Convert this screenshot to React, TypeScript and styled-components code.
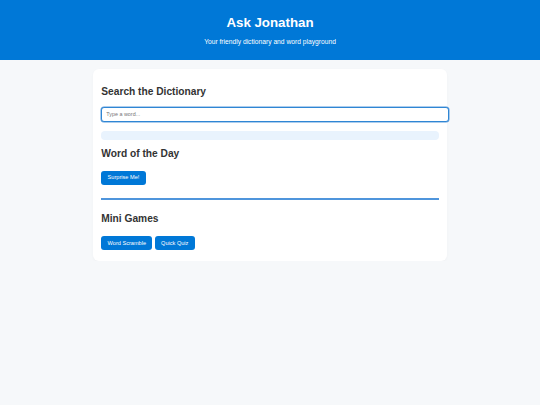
import React, { useState } from 'react';
import styled, { createGlobalStyle } from 'styled-components';

const GlobalStyle = createGlobalStyle`
  html, body {
    margin: 0;
    padding: 0;
    background: #f6f8fa;
    font-family: "Liberation Sans", Arial, sans-serif;
    color: #333;
  }
`;

const Header = styled.header`
  background: #0078d7;
  color: #fff;
  text-align: center;
  padding: 15.3px 0 14.5px;
`;

const Title = styled.h1`
  margin: 0 0 7.2px;
  font-size: 13.3px;
  line-height: 15.3px;
  font-weight: bold;
`;

const Tagline = styled.p`
  margin: 0;
  font-size: 6.7px;
  line-height: 7.7px;
`;

const Main = styled.main`
  padding-top: 9px;
`;

const Card = styled.div`
  width: 354px;
  box-sizing: border-box;
  margin: 0 auto;
  background: #fff;
  border-radius: 6px;
  padding: 8.3px;
  box-shadow: 0 1px 3px rgba(0, 0, 0, 0.03);
`;

const Heading = styled.h2`
  margin: 8.3px 0;
  font-size: 10.2px;
  line-height: 11.5px;
  font-weight: bold;
  color: #333;
`;

const SearchInput = styled.input`
  display: block;
  width: 100%;
  height: 13.6px;
  margin: 9.6px 0 0;
  padding: 0 4px;
  border: 1px solid #2f86d4;
  border-radius: 3px;
  font-family: "Liberation Sans", Arial, sans-serif;
  font-size: 5.4px;
  color: #333;
  outline: none;
  box-shadow: 0 0 0 0.5px #5a9bdc;

  &::placeholder {
    color: #777;
  }
`;

const Result = styled.div`
  margin: 8.7px 0 0;
  height: 8.7px;
  border-radius: 4px;
  background: #e9f3fd;
`;

const ButtonRow = styled.div`
  display: flex;
  gap: 2.4px;
  margin: 11.2px 0 2.9px;
`;

const Button = styled.button`
  height: 13.9px;
  padding: 0 6.3px;
  border: none;
  border-radius: 3px;
  background: #0078d7;
  color: #fff;
  font-family: "Liberation Sans", Arial, sans-serif;
  font-size: 5.6px;
  line-height: 6.4px;
  cursor: pointer;
`;

const Divider = styled.div`
  margin: 13.5px 0 13.2px;
  height: 2px;
  background: #4f95dc;
`;

export default function App() {
  const [word, setWord] = useState('');

  return (
    <>
      <GlobalStyle />
      <Header>
        <Title>Ask Jonathan</Title>
        <Tagline>Your friendly dictionary and word playground</Tagline>
      </Header>
      <Main>
        <Card>
          <Heading>Search the Dictionary</Heading>
          <SearchInput
            placeholder="Type a word..."
            value={word}
            onChange={(e) => setWord(e.target.value)}
          />
          <Result />
          <Heading>Word of the Day</Heading>
          <ButtonRow>
            <Button>Surprise Me!</Button>
          </ButtonRow>
          <Divider role="separator" />
          <Heading>Mini Games</Heading>
          <ButtonRow>
            <Button>Word Scramble</Button>
            <Button>Quick Quiz</Button>
          </ButtonRow>
        </Card>
      </Main>
    </>
  );
}
